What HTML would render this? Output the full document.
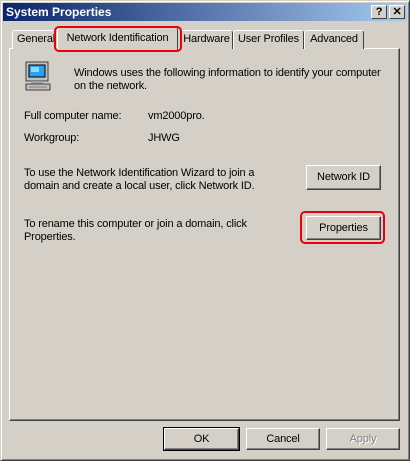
<!DOCTYPE html><html><head><style>
body{margin:0;width:410px;height:461px;background:#d4d0c8;font:11px/13px "Liberation Sans",sans-serif;letter-spacing:-0.15px;color:#000;position:relative;overflow:hidden}
.a{position:absolute}
.win{left:0;top:0;width:410px;height:461px;box-sizing:border-box;border:1px solid;border-color:#d4d0c8 #404040 #404040 #d4d0c8;box-shadow:inset 1px 1px #fff,inset -1px -1px #808080}
.title{left:3px;top:3px;width:404px;height:18px;background:linear-gradient(90deg,#0a246a,#a6caf0);color:#fff;font-weight:bold;font-size:12px;line-height:18px;padding-left:3px;box-sizing:border-box;letter-spacing:0}
.tb{top:5px;width:16px;height:14px;background:#d4d0c8;border:1px solid;border-color:#fff #404040 #404040 #fff;box-sizing:border-box;color:#000;font:bold 11px/12px "Liberation Sans",sans-serif;text-align:center}
.tab{top:30px;height:19px;border:1px solid;border-bottom:none;border-color:#fff #404040 #404040 #fff;border-radius:3px 3px 0 0;box-sizing:border-box;text-align:center;line-height:17px;background:#d4d0c8}
.panel{left:9px;top:48px;width:391px;height:373px;border:1px solid;border-color:#fff #404040 #404040 #fff;box-shadow:inset -1px -1px #808080;box-sizing:border-box}
.btn{border:1px solid;border-color:#fff #404040 #404040 #fff;box-shadow:inset -1px -1px #808080;box-sizing:border-box;text-align:center;background:#d4d0c8}
.red{border:2px solid #e8000a;border-radius:5px;box-sizing:border-box}
</style></head><body>
<div class="a win"></div>
<div class="a title">System Properties</div>
<div class="a tb" style="left:371px">?</div>
<div class="a tb" style="left:389px">✕</div>
<div class="a panel"></div>
<div class="a tab" style="left:12px;width:46px;text-align:left;padding-left:4px;overflow:hidden">General</div>
<div class="a tab" style="left:180px;width:53px">Hardware</div>
<div class="a tab" style="left:233px;width:71px">User Profiles</div>
<div class="a tab" style="left:304px;width:60px">Advanced</div>
<div class="a tab" style="left:57px;top:27px;height:23px;width:121px;line-height:20px;border-bottom:none">Network Identification</div>
<div class="a red" style="left:54px;top:26px;width:128px;height:26px"></div>
<svg class="a" style="left:23px;top:61px" width="34" height="34" viewBox="0 0 34 34">
<rect x="3" y="1" width="22" height="19" fill="#c0c0c0" stroke="#404040"/>
<rect x="6" y="4" width="16" height="12" fill="#2aa0f0" stroke="#000"/>
<rect x="8" y="6" width="8" height="5" fill="#8fd8ff"/>
<rect x="8" y="20" width="12" height="3" fill="#a0a0a0"/>
<rect x="3" y="23" width="24" height="6" fill="#c0c0c0" stroke="#404040"/>
<line x1="6" y1="26" x2="24" y2="26" stroke="#808080"/>
</svg>
<div class="a" style="left:74px;top:67px;width:320px">Windows uses the following information to identify your computer on the network.</div>
<div class="a" style="left:24px;top:110px">Full computer name:</div>
<div class="a" style="left:148px;top:110px">vm2000pro.</div>
<div class="a" style="left:24px;top:132px">Workgroup:</div>
<div class="a" style="left:148px;top:132px">JHWG</div>
<div class="a" style="left:24px;top:167px;width:255px">To use the Network Identification Wizard to join a domain and create a local user, click Network ID.</div>
<div class="a" style="left:24px;top:218px;width:255px">To rename this computer or join a domain, click Properties.</div>
<div class="a btn" style="left:306px;top:165px;width:75px;height:25px;line-height:23px">Network ID</div>
<div class="a btn" style="left:306px;top:216px;width:75px;height:24px;line-height:22px">Properties</div>
<div class="a red" style="left:300px;top:211px;width:85px;height:33px"></div>
<div class="a btn" style="left:164px;top:428px;width:75px;height:22px;line-height:20px;outline:1px solid #000">OK</div>
<div class="a btn" style="left:246px;top:428px;width:74px;height:22px;line-height:20px">Cancel</div>
<div class="a btn" style="left:326px;top:428px;width:74px;height:22px;line-height:20px;color:#808080;text-shadow:1px 1px #fff">Apply</div>
</body></html>
